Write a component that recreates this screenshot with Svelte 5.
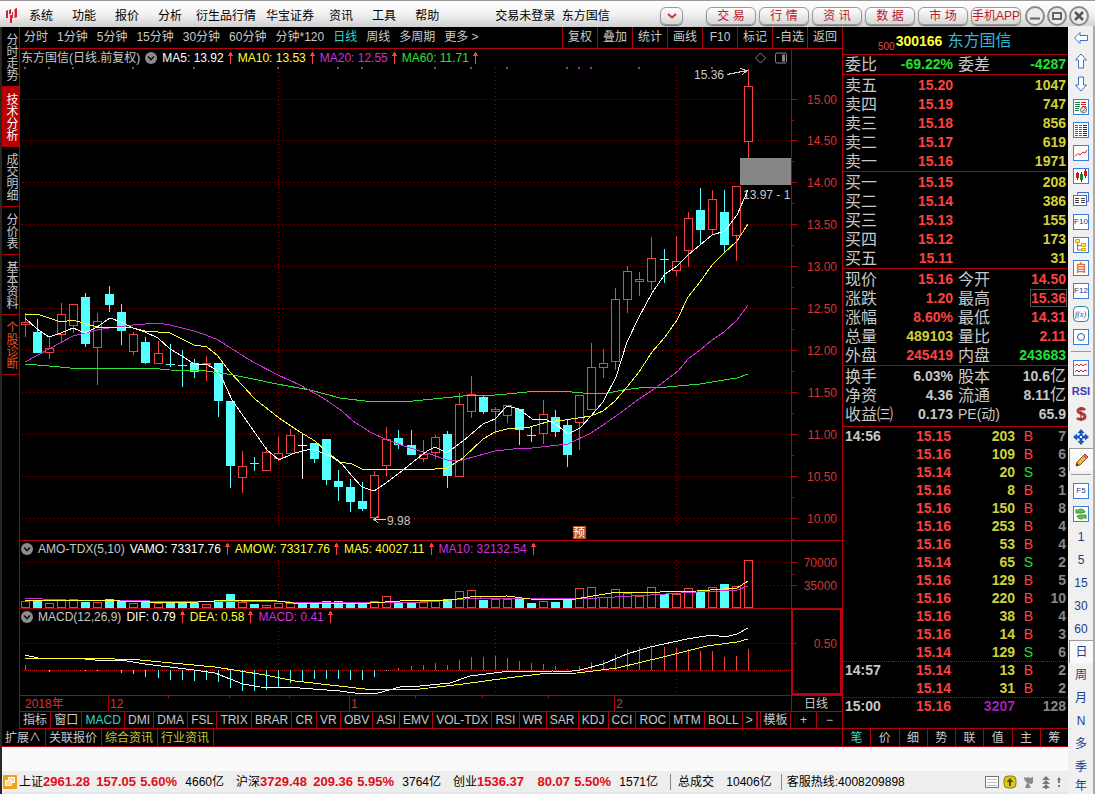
<!--
  Stock terminal: menu bar, daily candlestick chart with volume and MACD panes,
  quote panel, tool strip and index ticker.

  All chart panes share one coordinate system, each svg shows its own slice of it.
-->

<script>
	const menus = ['系统', '功能', '报价', '分析', '衍生品行情', '华宝证券', '资讯', '工具', '帮助'];
	const channels = ['交 易', '行 情', '资 讯', '数 据', '市 场', '手机APP'];
	const sideTabs = ['分时走势', '技术分析', '成交明细', '分价表', '基本资料', '个股诊断'];
	const periods = ['分时', '1分钟', '5分钟', '15分钟', '30分钟', '60分钟', '分钟*120', '日线', '周线', '多周期', '更多 >'];
	const chartTools = ['复权', '叠加', '统计', '画线', 'F10', '标记', '-自选', '返回'];
	const indicators = [
		'指标', '窗口', 'MACD', 'DMI', 'DMA', 'FSL', 'TRIX', 'BRAR', 'CR', 'VR', 'OBV', 'ASI',
		'EMV', 'VOL-TDX', 'RSI', 'WR', 'SAR', 'KDJ', 'CCI', 'ROC', 'MTM', 'BOLL'
	];
	const detailTabs = ['笔', '价', '细', '势', '联', '值', '主', '筹'];

	let sideTab = $state('技术分析');
	let period = $state('日线');
	let indicator = $state('MACD');
	let detailTab = $state('笔');

	// [high, body top, body bottom, low, kind]
	const candles = [
		[313, 322, 324, 336, 'u'], [319, 332, 353, 353, 'd'], [337, 348, 352, 358, 'u'],
		[303, 314, 334, 342, 'u'], [304, 304, 325, 332, 'u'], [293, 297, 344, 347, 'd'],
		[313, 321, 347, 384, 'u'], [286, 294, 305, 312, 'd'], [304, 312, 331, 345, 'd'],
		[332, 334, 351, 354, 'u'], [337, 342, 363, 364, 'd'], [341, 353, 363, 363, 'u'],
		[344, 364, 365, 367, 'd'], [350, 365, 366, 387, 'd'], [359, 363, 372, 378, 'd'],
		[356, 363, 364, 380, 'u'], [363, 363, 401, 417, 'd'], [401, 401, 466, 488, 'd'],
		[451, 466, 477, 492, 'u'], [457, 463, 464, 471, 'd'], [447, 452, 470, 470, 'u'],
		[437, 453, 458, 460, 'u'], [429, 435, 453, 453, 'u'], [434, 445, 446, 479, 'w'],
		[443, 443, 459, 463, 'd'], [439, 439, 480, 485, 'd'], [470, 481, 487, 501, 'd'],
		[479, 487, 502, 512, 'd'], [482, 501, 509, 511, 'd'], [471, 475, 517, 517, 'u'],
		[427, 439, 465, 475, 'u'], [430, 438, 445, 449, 'd'], [430, 445, 455, 455, 'd'],
		[440, 454, 458, 461, 'u'], [435, 437, 452, 458, 'u'], [431, 434, 476, 488, 'd'],
		[393, 404, 476, 476, 'u'], [376, 394, 411, 417, 'u'], [396, 397, 412, 414, 'd'],
		[407, 409, 411, 433, 'u'], [405, 405, 415, 422, 'u'], [409, 409, 430, 445, 'd'],
		[427, 435, 436, 442, 'd'], [400, 414, 433, 443, 'u'], [410, 417, 432, 437, 'd'],
		[419, 425, 455, 467, 'd'], [395, 395, 422, 449, 'u'], [343, 367, 409, 409, 'u'],
		[349, 363, 367, 377, 'u'], [288, 299, 361, 369, 'u'], [266, 271, 299, 312, 'u'],
		[272, 279, 281, 295, 'u'], [237, 258, 281, 289, 'u'], [249, 259, 260, 283, 'd'],
		[236, 261, 270, 275, 'u'], [212, 218, 250, 266, 'u'], [188, 210, 230, 245, 'd'],
		[190, 199, 229, 234, 'u'], [190, 212, 245, 253, 'd'], [186, 186, 235, 260, 'u'],
		[69, 86, 141, 157, 'u']
	];

	const volumes = [
		601, 600, 603, 599, 599, 602, 602, 599, 601, 603, 602, 603, 602, 602, 603, 604, 600, 594, 602, 604, 605,
		603, 603, 603, 603, 601, 601, 603, 603, 601, 596, 603, 602, 602, 601, 599, 591, 590, 600, 599, 599, 599,
		603, 601, 602, 599, 588, 587, 597, 589, 593, 596, 587, 594, 594, 588, 592, 587, 584, 586, 560
	];

	const histogram = [
		665, 670, 672, 670, 670, 671, 671, 670, 673, 674, 677, 678, 680, 680, 681, 680, 682, 688, 691, 691, 690,
		687, 683, 681, 679, 679, 679, 680, 680, 677, 671, 668, 666, 665, 663, 665, 660, 657, 657, 656, 658, 661,
		663, 664, 666, 669, 666, 662, 660, 654, 649, 647, 646, 647, 648, 649, 651, 651, 657, 656, 649
	];

	const priceLines = [
		['green', '25,364 49,366 70,368 150,368 170,370 206,371 220,373 233,375 253,379 277,384 310,390 340,398 373,402 400,401 413,401 433,399 463,396 495,395 507,394 537,391 560,391 583,393 608,393 623,390 647,387 667,387 700,384 724,380 737,378 748,374'],
		['magenta', '25,362 49,349 73,336 97,330 109,328 133,325 158,323 170,325 194,331 206,335 218,340 253,362 278,375 300,385 323,398 342,411 353,421 370,432 387,440 407,447 430,454 447,460 462,460 477,456 495,451 513,449 532,448 568,444 591,433 603,425 616,416 639,399 657,387 678,371 688,359 700,350 712,340 724,332 737,320 748,305'],
		['yellow', '25,315 37,314 61,322 73,320 97,327 133,328 145,331 170,333 194,345 207,347 218,356 230,372 255,399 279,418 300,432 315,441 327,452 340,462 352,464 362,469 374,470 387,469 413,469 423,470 447,468 463,458 483,439 495,432 507,429 530,427 547,422 565,420 591,416 603,411 615,401 627,387 639,372 652,352 665,337 677,320 688,297 700,282 712,265 724,253 737,241 748,224'],
		['white', '25,318 37,329 49,337 61,333 73,328 85,333 97,327 110,318 121,322 133,328 145,332 158,338 170,349 182,356 194,364 206,364 215,369 222,378 232,400 267,450 279,460 292,454 302,451 313,449 332,457 342,464 352,476 362,487 374,491 383,485 398,474 413,462 427,451 435,447 447,453 463,441 483,424 495,419 507,406 519,409 532,419 547,420 557,425 568,434 580,428 591,416 603,402 616,377 627,342 639,317 652,293 665,274 677,266 688,255 700,245 712,235 725,231 737,215 748,190']
	];
	const volumeLines = [
		['magenta', '25,598 60,600 120,600 180,602 240,601 290,602 370,603 420,602 450,600 480,598 580,599 650,595 697,592 720,591 737,590 748,586'],
		['yellow', '25,600 120,601 180,603 233,600 277,601 293,603 370,603 400,601 450,600 470,597 507,596 530,599 570,600 593,596 617,592 660,592 697,591 737,588 748,581']
	];
	const macdLines = [
		['white', '25,655 38,658 85,659 95,660 120,660 133,662 145,664 194,670 215,673 230,679 243,684 260,687 300,688 340,691 362,694 378,693 400,687 420,686 450,683 470,676 502,672 553,671 565,672 580,670 603,664 627,654 650,647 687,639 712,635 725,637 737,634 748,628'],
		['yellow', '25,658 90,658 140,660 215,667 265,675 295,681 330,685 365,689 395,690 420,689 463,684 507,678 540,674 577,673 617,668 663,657 707,646 737,642 748,639']
	];

	const priceTicks = [15, 14.5, 14, 13.5, 13, 12.5, 12, 11.5, 11, 10.5, 10];
	const monthLines = [278, 495, 676];
	const signals = [25, 49, 73, 133, 194, 278, 338, 362, 435, 471, 507, 567, 579, 591, 639, 712];

	const slotX = (i) => 25 + 12 * i + Math.floor((i + 10) / 21);
	const priceY = (price) => Math.floor(99 + (15 - price) * 83.8);

	const priceLegend = [
		['white', 'MA5: 13.92'], ['yellow', 'MA10: 13.53'], ['magenta', 'MA20: 12.55'], ['green', 'MA60: 11.71']
	];
	const volumeLegend = [
		['white', 'VAMO: 73317.76'], ['yellow', 'AMOW: 73317.76'], ['yellow', 'MA5: 40027.11'], ['magenta', 'MA10: 32132.54']
	];
	const macdLegend = [['white', 'DIF: 0.79'], ['yellow', 'DEA: 0.58'], ['magenta', 'MACD: 0.41']];

	const asks = [['卖五', '15.20', 1047], ['卖四', '15.19', 747], ['卖三', '15.18', 856], ['卖二', '15.17', 619], ['卖一', '15.16', 1971]];
	const bids = [['买一', '15.15', 208], ['买二', '15.14', 386], ['买三', '15.13', 155], ['买四', '15.12', 173], ['买五', '15.11', 31]];
	const quotes = [
		['现价', '15.16', 'up', '今开', '14.50', 'up'],
		['涨跌', '1.20', 'up', '最高', '15.36', 'up boxed'],
		['涨幅', '8.60%', 'up', '最低', '14.31', 'up'],
		['总量', '489103', 'amount', '量比', '2.11', 'up'],
		['外盘', '245419', 'up', '内盘', '243683', 'down']
	];
	const basics = [
		['换手', '6.03%', '股本', '10.6', '亿'],
		['净资', '4.36', '流通', '8.11', '亿'],
		['收益㈢', '0.173', 'PE(动)', '65.9', '']
	];
	const trades = [
		['14:56', '15.15', 203, 'B', 7], ['', '15.16', 109, 'B', 6], ['', '15.14', 20, 'S', 3],
		['', '15.16', 8, 'B', 1], ['', '15.16', 150, 'B', 8], ['', '15.16', 253, 'B', 4],
		['', '15.16', 53, 'B', 4], ['', '15.14', 65, 'S', 2], ['', '15.16', 129, 'B', 5],
		['', '15.16', 220, 'B', 10], ['', '15.16', 38, 'B', 4], ['', '15.16', 14, 'B', 3],
		['', '15.14', 129, 'S', 6], ['14:57', '15.14', 13, 'B', 2], ['', '15.14', 31, 'B', 2],
		['15:00', '15.16', 3207, '', 128]
	];
	const indexes = [
		['上证', '2961.28', '157.05', '5.60%', '4660亿'],
		['沪深', '3729.48', '209.36', '5.95%', '3764亿'],
		['创业', '1536.37', '80.07', '5.50%', '1571亿']
	];

	const strip = [
		'left', 'up', 'down', 'report', 'table', 'trend', 'candle', 'stack', 'F10', 'tree', '自', 'F12', 'fx', 'ring',
		'|', 'waves', 'RSI', 'dollar', 'move', 'pencil',
		'|', 'F5', 'refresh', '1', '5', '15', '30', '60', '日', '周', '月', 'N', '多', '季', '年'
	];
	const boxedText = ['F10', '自', 'F12', 'F5'];
	const boxedIcons = ['report', 'table', 'trend', 'candle', 'tree', 'ring', 'waves', 'refresh'];
	const plainIcons = ['left', 'up', 'down', 'stack', 'fx', 'dollar', 'move', 'pencil'];
</script>

{#snippet legend(name, items)}
	<div class="legend">
		<div class="legend__items">
			{#if name.startsWith('东')}<span class="legend__name">{name}</span>{/if}
			<button class="legend__toggle" aria-label="参数">
				<svg width="12" height="12" viewBox="0 0 12 12">
					<circle cx="6" cy="6" r="6" fill="#8c8c8c" />
					<path d="M3 4.500l3 3 3-3" fill="none" stroke="#111" stroke-width="1.600" />
				</svg>
			</button>
			{#if !name.startsWith('东')}<span class="legend__name">{name}</span>{/if}
			{#each items as [color, text]}
				<span class={color}>{text}</span>
				<svg class="legend__arrow" width="7" height="12" viewBox="0 0 7 12">
					<path d="M3 0h1v1h1v2h1v1H4v8H3V4H1V3h1V1h1z" fill="#ff4040" />
				</svg>
			{/each}
			{#if name.startsWith('东')}
				<svg class="legend__tools" width="34" height="12" viewBox="0 0 34 12" fill="none" stroke="#888">
					<path d="M6.500 1l5 5-5 5-5-5z" />
					<rect x="21.500" y="1" width="11" height="10" rx="1.500" />
					<rect x="28" y="2.500" width="3" height="7" fill="#888" stroke="none" />
				</svg>
			{/if}
		</div>
		<div class="legend__axis"></div>
	</div>
{/snippet}

{#snippet months(top, bottom)}
	{#each monthLines as x}
		<line class="grid" x1={x + 0.5} x2={x + 0.5} y1={top} y2={bottom} />
	{/each}
{/snippet}

{#snippet curves(lines)}
	{#each lines as [color, points]}
		<polyline class="curve {color}" {points} />
	{/each}
{/snippet}

{#snippet book(rows)}
	<table class="block">
		<colgroup><col class="w50" /><col class="w60" /><col /></colgroup>
		<tbody>
			{#each rows as [label, price, lots]}
				<tr><th>{label}</th><td class="up">{price}</td><td class="amount">{lots}</td></tr>
			{/each}
		</tbody>
	</table>
{/snippet}

{#snippet icon(name)}
	<svg width="16" height="16" viewBox="0 0 16 16" fill="none" stroke="#3c6fd0">
		{#if boxedIcons.includes(name)}
			<rect x="0.500" y="0.500" width="15" height="15" fill="#fff" stroke="#3c7fd8" />
		{/if}
		{#if name === 'left'}
			<path d="M1.500 8L7 2.500v3h7.500v5H7v3z" fill="#fff" />
		{:else if name === 'up'}
			<path d="M8 1l5.500 6h-3v8h-5V7h-3z" fill="#fff" />
		{:else if name === 'down'}
			<path d="M8 15l5.500-6h-3V1h-5v8h-3z" fill="#fff" />
		{:else if name === 'report'}
			<path d="M2 3.500h5M2 5.500h5M2 7.500h5M2 9.500h4M2 11.500h4" stroke="#16843c" />
			<path d="M8 3.500h5M8 5.500h5M9 7.500h4" stroke="#d22" />
			<circle cx="10.500" cy="11" r="3" stroke="#777" fill="#ddd" /><path d="M9 13l5-5" stroke="#777" />
		{:else if name === 'table'}
			<path d="M2 3.500h3M2 5.500h3M2 7.500h3M2 9.500h3M2 11.500h3M2 13.500h3" stroke="#d22" />
			<path d="M6 3.500h3M6 5.500h3M6 7.500h3M6 9.500h3M6 11.500h3M6 13.500h3" stroke="#16843c" />
			<path d="M10 3.500h4M10 5.500h4M10 7.500h4M10 9.500h4M10 11.500h4M10 13.500h4" stroke="#226" />
		{:else if name === 'trend'}
			<path d="M2 11.500l3-3 2 1.500 3-3 2 1 2-3" stroke="#c22" />
		{:else if name === 'candle'}
			<path d="M4.500 4v8M8.500 4v10M12.500 1v9" stroke="#333" />
			<path d="M3 5h3v5H3zM11 3h3v5h-3z" fill="#e01010" stroke="none" />
			<path d="M7 6h3v6H7z" fill="#0a8a20" stroke="none" />
		{:else if name === 'stack'}
			<path d="M4.500 3.500v-2h11v9h-2" /><rect x="0.500" y="4.500" width="13" height="10" fill="#fff" />
			<path d="M2 7.500h4M8 7.500h4M2 9.500h4M8 9.500h4M2 11.500h4M8 11.500h4" stroke="#444" />
		{:else if name === 'tree'}
			<path d="M4.500 5v8H9M4.500 8.500H9" stroke="#777" />
			<path d="M2.500 2.500h4v3h-4zM8.500 6.500h4v3h-4zM8.500 11.500h4v2h-4z" stroke="#d9a400" fill="#ffe680" />
		{:else if name === 'fx'}
			<rect x="0.500" y="0.500" width="15" height="15" rx="4" stroke="#16849c" fill="#fff" />
			<text x="2" y="11" class="strip__fx">f(x)</text>
		{:else if name === 'ring'}
			<circle cx="8" cy="8" r="3.500" stroke="#245aa8" />
		{:else if name === 'waves'}
			<path d="M2 6l2-2 2 2 2-2 2 2 2-2 2 1" stroke="#c33" />
			<path d="M2 12l2-2 2 2 2-2 2 2 2-2 2 1" stroke="#a24" />
		{:else if name === 'dollar'}
			<path d="M12 4C10 2 5 2 5 5s7 2 7 5.500S6 14 4 12" stroke="#b33a3a" stroke-width="3" /><path d="M8 1v14" stroke="#8b2222" />
		{:else if name === 'move'}
			<path d="M8 0l3.500 4H9.500v2.500H12V4.500L16 8l-4 3.500V9.500H9.500V12h2L8 16l-3.500-4h2V9.500H4v2L0 8l4-3.500v2h2.500V4h-2z" fill="#1757c2" stroke="none" />
			<path d="M7 7h2v2H7z" fill="#fff" stroke="none" />
		{:else if name === 'pencil'}
			<path d="M2 14l1-4 8-8 3 3-8 8z" fill="#f2b04a" stroke="#8a5a1c" /><path d="M11 2l3 3-1.500 1.500-3-3z" fill="#e07b7b" stroke="#a33" />
			<path d="M2 14l1-3 2 2z" fill="#333" stroke="none" />
		{:else if name === 'refresh'}
			<path d="M3 7V3l1.500 1.500C7 2 11 3 12 6L9 7zM13 9v4l-1.500-1.500C9 14 5 13 4 10l3-1z" fill="#5bbf4a" stroke="#3a9a2c" />
		{/if}
	</svg>
{/snippet}

<div class="app">
	<header class="titlebar">
		<svg width="13" height="16" viewBox="0 0 13 16" fill="#d21f3c">
			<path d="M1 3l2-1v8H1zM4 2l2-1v5H4zM5 7h2v8H5zM7 4h1v6H7zM9.500 1l2.500-1v9l-2.500 1z" />
		</svg>
		<nav class="titlebar__menus">
			{#each menus as menu}
				<button class="menu" class:menu--long={menu.length > 2}>{menu}</button>
			{/each}
		</nav>
		<span class="titlebar__status">交易未登录&nbsp; 东方国信</span>
		<button class="pill pill--small" aria-label="展开">
			<svg width="10" height="6" viewBox="0 0 10 6"><path d="M1 1l4 3.500L9 1" fill="none" stroke="#c0392b" stroke-width="2" /></svg>
		</button>
		<div class="titlebar__channels">
			{#each channels as channel}<button class="pill">{channel}</button>{/each}
		</div>
		<div class="titlebar__window">
			<button class="round" aria-label="最小化">
				<svg width="12" height="12" viewBox="0 0 12 12"><path d="M1 8.500h10" stroke="#666" stroke-width="2" /></svg>
			</button>
			<button class="round" aria-label="最大化">
				<svg width="12" height="12" viewBox="0 0 12 12"><rect x="2" y="3" width="8" height="6" fill="none" stroke="#666" stroke-width="2" /></svg>
			</button>
			<button class="round" aria-label="关闭">
				<svg width="12" height="12" viewBox="0 0 12 12"><path d="M2 2l8 8M10 2l-8 8" stroke="#555" stroke-width="2.500" /></svg>
			</button>
		</div>
	</header>

	<div class="body">
		<div class="desk">
			<main class="workspace">
				<div class="left">
					<div class="left__main">
						<nav class="side">
							{#each sideTabs as tab}
								<button
									class="side__tab"
									class:side__tab--active={tab === sideTab}
									class:side__tab--hot={tab === '个股诊断'}
									onclick={() => (sideTab = tab)}>{tab}</button>
							{/each}
						</nav>

						<div class="charts">
							<div class="periods">
								<div class="periods__list">
									{#each periods as item}
										<button class:cyan={item === period} onclick={() => (period = item)}>{item}</button>
									{/each}
								</div>
								{#each chartTools as tool}<button class="periods__tool">{tool}</button>{/each}
							</div>

							<section>
								{@render legend('东方国信(日线.前复权)', priceLegend)}
								<svg class="pane" viewBox="20 66 822 474">
									{#each priceTicks as price}
										{@const y = priceY(price)}
										<line class="grid" x1="22" x2="791" y1={y + 0.5} y2={y + 0.5} />
										<path class="axis" d="M792 {y + 0.5}h5M792 {y + 21.5}h2" />
										<text class="scale" x="837" y={y + 5}>{price.toFixed(2)}</text>
									{/each}
									{@render months(68, 527)}
									{#each signals as x}<rect x={x - 1} y="67" width="2" height="2" fill="#a030a0" />{/each}
									{#each candles as [high, top, bottom, low, kind], i}
										{@const x = slotX(i)}
										{#if kind === 'u'}
											<path class="rise" d="M{x + 0.5} {high}V{top}M{x + 0.5} {bottom + 1}V{low + 1}M{x - 3.5} {top + 0.5}h8V{bottom + 0.5}h-8z" />
										{:else}
											<rect class="fall {kind}" {x} y={high} width="1" height={low - high} />
											<rect class="fall {kind}" x={x - 4} y={top} width="9" height={bottom - top} />
										{/if}
									{/each}
									<rect x="740" y="158" width="51" height="27" fill="#868686" />
									<text class="note" x="743" y="199">13.97 - 1</text>
									{@render curves(priceLines)}
									<text class="note" x="694" y="79">15.36</text>
									<path class="pointer" d="M727 74.500L747 70.500M740 68.500L747 70.500L742 75" />
									<text class="note" x="387" y="525">9.98</text>
									<path class="pointer" d="M386 519.500H374M378 516L374 519.500L378 523" />
									<rect x="573" y="526" width="13" height="13" fill="#b8501c" />
									<text class="badge" x="573" y="537">预</text>
									<line class="axis" x1="791.5" x2="791.5" y1="66" y2="540" />
								</svg>
							</section>

							<section class="section">
								{@render legend('AMO-TDX(5,10)', volumeLegend)}
								<svg class="pane" viewBox="20 557 822 51">
									<path class="grid" d="M22 562.500H791M22 585.500H791" />
									{@render months(560, 608)}
									{#each volumes as top, i}
										{#if candles[i][4] === 'u'}
											<rect class="rise" x={slotX(i) - 3.5} y={top + 0.5} width="8" height={607 - top} />
										{:else}
											<rect class="fall" x={slotX(i) - 4} y={top} width="9" height={608 - top} />
										{/if}
									{/each}
									{@render curves(volumeLines)}
									<path class="axis" d="M791.500 557V608M792 562.500h5M792 574.500h2M792 585.500h5" />
									<text class="scale" x="837" y="567">70000</text>
									<text class="scale" x="837" y="590">35000</text>
								</svg>
							</section>

							<section class="section section--macd">
								{@render legend('MACD(12,26,9)', macdLegend)}
								<svg class="pane" viewBox="20 625 822 70">
									<path class="grid" d="M22 643.500H791" />
									<path class="zero" d="M22 670.500H791" />
									{@render months(627, 695)}
									{#each histogram as y, i}
										<line class={y < 670 ? 'rise' : 'dip'} x1={slotX(i) + 0.5} x2={slotX(i) + 0.5} y1="670" y2={y} />
									{/each}
									{@render curves(macdLines)}
									<path class="frame" d="M792 625V694H841V625" />
									<path class="axis" d="M793 643.500h4" />
									<text class="scale" x="837" y="648">0.50</text>
								</svg>
							</section>

							<svg class="pane section" viewBox="20 696 822 15">
								<path class="axis" d="M108.500 696v15M349.500 696v15M614.500 696v15M168.500 696v2M229.500 696v2M289.500 696v2M415.500 696v2M482.500 696v2M548.500 696v2M791.500 696v15" />
								<text class="date" x="25" y="708">2018年</text>
								<text class="date" x="110" y="708">12</text>
								<text class="date" x="351" y="708">1</text>
								<text class="date" x="616" y="708">2</text>
								<text class="note" x="804" y="708">日线</text>
							</svg>

							<div class="indicators">
								<div class="indicators__list">
									{#each indicators as item}
										<button class:cyan={item === indicator} onclick={() => (indicator = item)}>{item}</button>
									{/each}
									<button>&gt;</button>
								</div>
								<button class="indicators__template">模板</button>
								<button class="indicators__zoom">+</button>
								<button class="indicators__zoom">−</button>
							</div>
						</div>
					</div>

					<div class="links">
						<button>扩展∧</button><button>关联报价</button>
						<button class="olive">综合资讯</button><button class="olive">行业资讯</button>
					</div>
				</div>

				<aside class="quote">
					<h1 class="quote__title"><small>500</small><b>300166</b> <span>东方国信</span></h1>
					<table class="block block--ratio">
						<colgroup><col class="w50" /><col class="w60" /><col class="w50" /><col /></colgroup>
						<tbody><tr><th>委比</th><td class="down">-69.22%</td><th class="second">委差</th><td class="down">-4287</td></tr></tbody>
					</table>
					{@render book(asks)}
					{@render book(bids)}
					<table class="block">
						<colgroup><col class="w50" /><col class="w60" /><col class="w50" /><col /></colgroup>
						<tbody>
							{#each quotes as [name, value, tone, name2, value2, tone2]}
								<tr><th>{name}</th><td class={tone}>{value}</td><th class="second">{name2}</th><td><span class={tone2}>{value2}</span></td></tr>
							{/each}
						</tbody>
					</table>
					<table class="block block--basics">
						<colgroup><col class="w50" /><col class="w60" /><col class="w50" /><col /></colgroup>
						<tbody>
							{#each basics as [name, value, name2, value2, unit]}
								<tr>
									<th>{name}</th><td>{value}</td>
									<th class="second" class:pe={name2.startsWith('PE')}>{name2}</th>
									<td>{value2}{#if unit}<span class="unit">{unit}</span>{/if}</td>
								</tr>
							{/each}
						</tbody>
					</table>
					<table class="trades">
						<colgroup><col class="w50" /><col class="w58" /><col class="w64" /><col class="w27" /><col /></colgroup>
						<tbody>
							{#each trades as [time, price, lots, side, count], i}
								<tr class:trades__break={i > 0 && time}>
									<td class="trades__time">{time}</td>
									<td class="up">{price}</td>
									<td class={side ? 'amount' : 'purple'}>{lots}</td>
									<td class="trades__side {side === 'S' ? 'down' : 'up'}">{side}</td>
									<td class="trades__count">{count}</td>
								</tr>
							{/each}
						</tbody>
					</table>
					<div class="quote__tabs">
						{#each detailTabs as tab}
							<button class:cyan={tab === detailTab} onclick={() => (detailTab = tab)}>{tab}</button>
						{/each}
					</div>
				</aside>
			</main>

			<div class="blank"></div>

			<footer class="ticker">
				<svg class="ticker__logo" width="14" height="14" viewBox="0 0 14 14">
					<rect width="14" height="14" rx="1" fill="#f0a020" />
					<path d="M5.500 5V2.500h6v5H9M2.500 5.500h6v5h-6z" fill="#ffd98a" stroke="#fff" />
				</svg>
				{#each indexes as [name, value, change, percent, turnover]}
					<div class="index">
						<span>{name}</span><b>{value}</b><b class="right">{change}</b><b class="right">{percent}</b><span class="right">{turnover}</span>
					</div>
				{/each}
				<span class="ticker__total">总成交 <span>10406亿</span></span>
				<span class="ticker__hotline">客服热线:4008209898</span>
				<svg class="ticker__icons" width="78" height="14" viewBox="0 0 78 14">
					<rect x="0.500" y="1.500" width="13" height="11" fill="#fff" stroke="#777" />
					<path d="M2 4.500h10M2 7.500h10M2 10.500h10" stroke="#bbb" />
					<rect x="19" y="1" width="12" height="12" rx="4" fill="#d8c81c" stroke="#8a8010" />
					<path d="M25 3l3.500 4H26v4h-2V7h-2.500z" fill="#5a5200" />
					<path d="M39 2c0 4 3 7 8 7l1-2V2l-3 1-2-1-2 1zM42 8l-2 5h6l-2-4z" fill="#888" />
					<path d="M61 1l4 4h-8zM61 5l4 4h-8zM61 9l4 4h-3v1h-2v-1h-3z" fill="#777" />
					<path d="M74 2l2 3h-1v3h-2V5h-1zM73 10h2v2h-2z" fill="#777" />
				</svg>
			</footer>
		</div>

		<div class="strip">
			{#each strip as item}
				{#if item === '|'}
					<hr class="strip__line" />
				{:else}
					<button
						class="strip__button"
						class:strip__button--pressed={item === 'pencil' || item === '日'}
						class:strip__button--bold={item === 'RSI'}
						aria-label={item}>
						{#if boxedText.includes(item)}
							<span class="strip__frame" class:orange={item === '自'}>{item}</span>
						{:else if boxedIcons.includes(item) || plainIcons.includes(item)}
							{@render icon(item)}
						{:else}
							{item}
						{/if}
					</button>
				{/if}
			{/each}
		</div>
	</div>
</div>

<style>
	:global(body) {
		background: #e4e6e8;
	}

	.app {
		--line: #b0000c;
		font: 12px/16px 'Liberation Sans', 'Noto Sans CJK SC', sans-serif;
		color: #c8c8c8;
		white-space: nowrap;
	}

	button {
		padding: 0;
		border: 0;
		background: none;
		color: inherit;
		font: inherit;
		white-space: nowrap;
	}

	svg {
		display: block;
		flex: none;
	}

	.white { color: #fff; }
	.yellow { color: #ff3; }
	.magenta { color: #d030d8; }
	.green { color: #30e030; }
	.cyan { color: #35d6c8; }
	.olive { color: #c8c832; }

	/* title bar */
	.titlebar {
		display: flex;
		align-items: center;
		box-sizing: border-box;
		height: 27px;
		padding: 3px 6px 0 5px;
		border-top: 1px solid #999;
		background: linear-gradient(#fff, #f2f2f2 50%, #cfcfcf);
		color: #000;
	}

	.titlebar__menus {
		display: flex;
		margin-left: 1px;
	}

	.menu {
		padding: 0 9px 0 10px;
	}

	.menu--long {
		padding: 0 5px;
	}

	.titlebar__status {
		margin-left: 47px;
	}

	.pill {
		box-sizing: border-box;
		width: 50px;
		height: 18px;
		border: 1px solid #999;
		border-radius: 6px;
		background: linear-gradient(#fff, #d6d6d6);
		box-shadow: 0 1px 1px #777;
		color: #b8202a;
		line-height: 16px;
	}

	.pill--small {
		display: grid;
		place-items: center;
		width: 23px;
		margin-left: auto;
	}

	.titlebar__channels {
		display: flex;
		gap: 3px;
		margin: 0 4px 0 23px;
	}

	.titlebar__window {
		display: flex;
		gap: 2px;
	}

	.round {
		display: grid;
		place-items: center;
		box-sizing: border-box;
		width: 20px;
		height: 20px;
		border: 2px solid #8a8a8a;
		border-radius: 50%;
		background: #ececec;
	}

	/* frame */
	.body {
		display: flex;
	}

	.desk {
		flex: 1;
		min-width: 0;
		border-left: 2px solid #2a2622;
	}

	.workspace {
		display: flex;
		background: #000;
	}

	.left {
		display: flex;
		flex-direction: column;
		flex: 1;
		min-width: 0;
	}

	.left__main {
		display: flex;
		flex: 1;
	}

	.side {
		box-sizing: border-box;
		width: 18px;
		border-right: 1px solid var(--line);
	}

	.side__tab {
		display: flex;
		align-items: center;
		width: 17px;
		padding: 6px 0 5px;
		border-bottom: 1px solid var(--line);
		writing-mode: vertical-rl;
		text-orientation: upright;
		line-height: 17px;
	}

	.side__tab--active {
		background: #b80000;
		color: #fff;
	}

	.side__tab--hot {
		color: #f0501e;
	}

	.charts {
		flex: 1;
		min-width: 0;
	}

	.periods {
		display: flex;
		height: 21px;
		border-bottom: 1px solid var(--line);
		line-height: 21px;
	}

	.periods__list {
		display: flex;
		flex: 1;
		gap: 9px;
		padding-left: 4px;
	}

	.periods__tool {
		box-sizing: border-box;
		width: 35px;
		border-left: 1px solid var(--line);
	}

	/* chart panes */
	.section {
		border-top: 1px solid var(--line);
	}

	.legend {
		display: flex;
		height: 16px;
	}

	section:first-of-type .legend {
		height: 17px;
	}

	.legend__items {
		display: flex;
		align-items: center;
		flex: 1;
		padding-left: 1px;
	}

	.legend__toggle {
		margin-right: 5px;
	}

	.legend__name {
		margin-right: 5px;
	}

	.legend__arrow {
		margin: 0 4px 0 3px;
	}

	.legend__tools {
		margin: 0 3px 0 auto;
	}

	.legend__axis {
		box-sizing: border-box;
		width: 51px;
		border-left: 1px solid var(--line);
	}

	.section--macd .legend__axis {
		border: 2px solid #c00010;
		border-width: 1px 2px 0;
	}

	.pane {
		width: 100%;
		height: auto;
		shape-rendering: crispEdges;
	}

	.grid {
		stroke: #8a0c0c;
		stroke-dasharray: 1 3;
	}

	.zero {
		stroke: #c01818;
		stroke-dasharray: 1 1;
	}

	.axis {
		fill: none;
		stroke: var(--line);
	}

	.frame {
		fill: none;
		stroke: #c00010;
		stroke-width: 2;
	}

	.rise {
		fill: #000;
		stroke: #f04040;
	}

	.fall {
		fill: #54ffff;
	}

	.fall.w {
		fill: #fff;
	}

	.dip {
		stroke: #54ffff;
	}

	.curve {
		fill: none;
		stroke: currentColor;
	}

	.scale {
		fill: #d83434;
		text-anchor: end;
	}

	.date {
		fill: #d83434;
	}

	.note {
		fill: #c8c8c8;
	}

	.badge {
		fill: #fff;
	}

	.pointer {
		fill: none;
		stroke: #d0d0d0;
	}

	.indicators {
		display: flex;
		height: 16px;
		border-top: 1px solid var(--line);
		border-bottom: 1px solid var(--line);
	}

	.indicators__list {
		display: flex;
		flex: 1;
		border-right: 1px solid var(--line);
	}

	.indicators__list button {
		flex: 1 0 auto;
		padding: 0 2px;
		border-right: 1px solid var(--line);
	}

	.indicators__template {
		width: 30px;
		margin-left: 2px;
		border-left: 1px solid var(--line);
	}

	.indicators__zoom {
		box-sizing: border-box;
		width: 26px;
		border-left: 1px solid var(--line);
	}

	.links {
		display: flex;
		height: 17px;
		border-bottom: 1px solid var(--line);
	}

	.links button {
		padding: 0 4px 0 3px;
		border-right: 1px solid var(--line);
	}

	/* quote panel */
	.quote {
		display: flex;
		flex-direction: column;
		box-sizing: border-box;
		width: 226px;
		border-left: 1px solid var(--line);
	}

	.quote__title {
		display: flex;
		align-items: center;
		gap: 5px;
		height: 27px;
		margin: 0;
		padding-left: 35px;
		font-size: 16px;
		font-weight: 400;
		color: #30b8d8;
	}

	.quote__title small {
		align-self: flex-end;
		margin-right: -4px;
		font-size: 10px;
		line-height: 14px;
		color: #e04848;
	}

	.quote__title b {
		font-size: 14px;
		color: #ff3;
	}

	table {
		width: 100%;
		border-spacing: 0;
		table-layout: fixed;
		font-size: 14px;
		font-weight: 700;
		line-height: 19px;
	}

	.w50 { width: 50px; }
	.w58 { width: 58px; }
	.w60 { width: 60px; }
	.w64 { width: 64px; }
	.w27 { width: 27px; }

	th,
	td {
		height: 19px;
		padding: 0;
		text-align: right;
	}

	th {
		padding-left: 2px;
		font-size: 16px;
		font-weight: 400;
		text-align: left;
	}

	th.second {
		padding-left: 5px;
	}

	th.pe {
		font-size: 14px;
	}

	td:last-child {
		padding-right: 2px;
	}

	.block {
		padding-top: 1px;
		border-top: 1px solid var(--line);
	}

	.block--ratio {
		padding-top: 0;
	}

	.block--basics {
		padding: 1px 0 2px;
	}

	.up { color: #ff4040; }
	.down { color: #20e030; }
	.amount { color: #d0d038; }
	.purple { color: #a020b0; }

	.boxed {
		outline: 1px solid #4c5458;
	}

	.unit {
		font-size: 16px;
		font-weight: 400;
		line-height: 0;
	}

	.trades {
		border-top: 1px solid var(--line);
		line-height: 18px;
	}

	.trades td {
		box-sizing: border-box;
		height: 18px;
	}

	.trades__break td {
		border-top: 1px dotted #a01010;
		line-height: 17px;
	}

	.trades .trades__time {
		padding-left: 2px;
		text-align: left;
	}

	.trades .trades__side {
		font-weight: 400;
		text-align: center;
	}

	.trades__count {
		color: #888;
	}

	.quote__tabs {
		display: flex;
		height: 17px;
		margin-top: auto;
		border-top: 1px solid var(--line);
		border-bottom: 1px solid var(--line);
	}

	.quote__tabs button {
		flex: 1;
	}

	.quote__tabs button + button {
		border-left: 1px solid var(--line);
	}

	/* bottom */
	.blank {
		height: 24px;
		background: #fafafa;
	}

	.ticker {
		display: flex;
		align-items: center;
		height: 21px;
		padding-left: 1px;
		background: #eee;
		color: #000;
	}

	.ticker__logo {
		margin-right: 2px;
	}

	.index {
		display: grid;
		grid-template-columns: 24px 47px 46px 41px 47px;
		width: 217px;
	}

	.index b {
		font-size: 13px;
		color: #e00c18;
	}

	.right {
		text-align: right;
	}

	.ticker__total,
	.ticker__hotline {
		padding-left: 7px;
		border-left: 1px solid #888;
	}

	.ticker__total span {
		margin: 0 9px;
	}

	.ticker__hotline {
		padding-left: 5px;
	}

	.ticker__icons {
		margin: 0 5px 0 auto;
	}

	/* tool strip */
	.strip {
		box-sizing: border-box;
		width: 27px;
		margin-top: -1px;
		padding-left: 1px;
		border-right: 2px solid #aaa;
		background: #f0f0f0;
		color: #1c3c88;
	}

	.strip__button {
		display: grid;
		place-items: center;
		box-sizing: border-box;
		width: 24px;
		height: 23px;
	}

	.strip__button:last-child {
		height: 16px;
	}

	.strip__button--pressed {
		border: 1px solid #999;
		border-width: 1px 0 0 1px;
		background: #fafafa;
	}

	.strip__button--bold {
		font-size: 11px;
		font-weight: 700;
		color: #4038b8;
	}

	.strip__frame {
		display: grid;
		place-items: center;
		box-sizing: border-box;
		width: 16px;
		height: 16px;
		border: 1px solid #3c7fd8;
		background: #fff;
		font-size: 8px;
		line-height: 14px;
	}

	.orange {
		font-size: 11px;
		font-weight: 700;
		color: #e07030;
	}

	.strip__fx {
		font: italic 8px 'Liberation Serif', serif;
		fill: #1c3c88;
		stroke: none;
	}

	.strip__line {
		height: 1px;
		margin: 3px 2px 4px;
		border: 0;
		background: #999;
	}
</style>
